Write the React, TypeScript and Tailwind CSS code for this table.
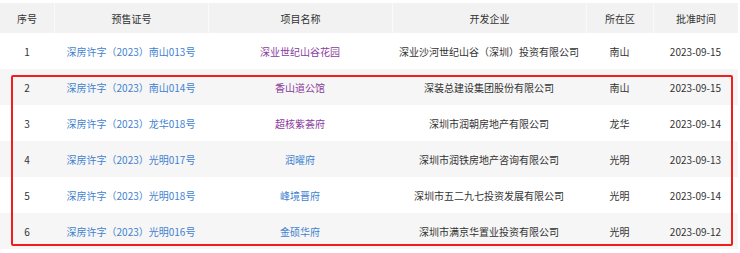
import React from "react";

type Row = {
  no: string;
  license: string;
  name: string;
  visited: boolean;
  company: string;
  area: string;
  date: string;
};

const rows: Row[] = [
  { no: "1", license: "深房许字（2023）南山013号", name: "深业世纪山谷花园", visited: true, company: "深业沙河世纪山谷（深圳）投资有限公司", area: "南山", date: "2023-09-15" },
  { no: "2", license: "深房许字（2023）南山014号", name: "香山道公馆", visited: true, company: "深装总建设集团股份有限公司", area: "南山", date: "2023-09-15" },
  { no: "3", license: "深房许字（2023）龙华018号", name: "超核紫荟府", visited: true, company: "深圳市润朝房地产有限公司", area: "龙华", date: "2023-09-14" },
  { no: "4", license: "深房许字（2023）光明017号", name: "润曜府", visited: false, company: "深圳市润铁房地产咨询有限公司", area: "光明", date: "2023-09-13" },
  { no: "5", license: "深房许字（2023）光明018号", name: "峰境晋府", visited: false, company: "深圳市五二九七投资发展有限公司", area: "光明", date: "2023-09-14" },
  { no: "6", license: "深房许字（2023）光明016号", name: "金硕华府", visited: false, company: "深圳市满京华置业投资有限公司", area: "光明", date: "2023-09-12" },
];

const headers = ["序号", "预售证号", "项目名称", "开发企业", "所在区", "批准时间"];
const cols = "grid grid-cols-[54px_154px_184px_194px_67px_85px]";

export default function App() {
  return (
    <div
      className="relative w-[740px] h-[253px] bg-white pt-[3px] text-[10px] text-[#333333] overflow-hidden"
      style={{ fontFamily: '"Noto Sans CJK SC", "Noto Sans", sans-serif' }}
    >
      <div className="w-[738px]">
        <div className={`${cols} h-[30px] bg-[#f2f2f2]`}>
          {headers.map((h, i) => (
            <div
              key={h}
              className={`flex items-center justify-center ${i > 0 ? "border-l border-[#fafafa]" : ""}`}
            >
              {h}
            </div>
          ))}
        </div>
        {rows.map((r, i) => (
          <div
            key={r.no}
            className={`${cols} h-[36px] ${i % 2 === 1 ? "bg-[#f6f6f6]" : "bg-white"}`}
          >
            <div className="flex items-center justify-center">{r.no}</div>
            <div className="flex items-center justify-center text-[#3f82d0]">{r.license}</div>
            <div className={`flex items-center justify-center ${r.visited ? "text-[#8a3b9c]" : "text-[#3f82d0]"}`}>{r.name}</div>
            <div className="flex items-center justify-center">{r.company}</div>
            <div className="flex items-center justify-center">{r.area}</div>
            <div className="flex items-center justify-center">{r.date}</div>
          </div>
        ))}
      </div>
      <div className="absolute left-[11px] top-[75px] w-[722px] h-[171px] border-2 border-[#f21d1d] rounded-[2px] pointer-events-none" />
    </div>
  );
}
